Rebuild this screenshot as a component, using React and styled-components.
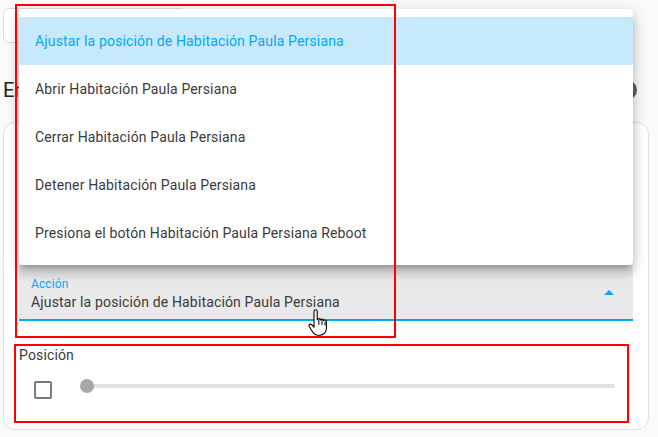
import React from 'react';
import styled, { createGlobalStyle } from 'styled-components';

const GlobalStyle = createGlobalStyle`
    body {
        margin: 0;
        background: #fafafa;
        font-family: Roboto, "Noto Sans", sans-serif;
        color: #212121;
    }
`;

const Page = styled.div`
    position: relative;
    width: 658px;
    height: 437px;
    padding: 8px 9px 0 3px;
    box-sizing: border-box;
    overflow: hidden;
`;
const SearchBox = styled.div`
    width: 183px;
    height: 35px;
    box-sizing: border-box;
    border: solid 1px #dcdcdc;
    border-radius: 6px;
    background: #fff;
`;
const Header = styled.div`
    display: flex;
    align-items: center;
    justify-content: space-between;
    height: 40px;
    margin-top: 27px;
    padding-right: 12px;
`;
const Heading = styled.h1`
    margin: 0;
    font-size: 20px;
    font-weight: 400;
    color: #212121;
`;
const HelpIcon = styled.div`
    width: 20px;
    height: 20px;
    border-radius: 50%;
    background: #5f5f5f;
`;
const Card = styled.section`
    margin-top: 12px;
    height: 308px;
    box-sizing: border-box;
    border: solid 1px #e0e0e0;
    border-radius: 12px;
    background: #fff;
    padding: 0 15px;
`;
const CardTop = styled.div`
    height: 142px;
`;
const Field = styled.div`
    position: relative;
    display: flex;
    align-items: center;
    height: 56px;
    box-sizing: border-box;
    padding: 0 12px;
    background: #e9e9e9;
    border-radius: 4px 4px 0 0;
    border-bottom: solid 2px #03a9f4;
`;
const FieldText = styled.div`
    flex: 1;
    padding-top: 6px;
`;
const FieldLabel = styled.div`
    font-size: 12px;
    color: #03a9f4;
    line-height: 14px;
    letter-spacing: 0.1px;
`;
const FieldValue = styled.div`
    font-size: 14px;
    color: #3a3a3a;
    line-height: 22px;
    letter-spacing: 0.15px;
`;
const Arrow = styled.div`
    width: 0;
    height: 0;
    margin-right: 7px;
    border-left: solid 5px transparent;
    border-right: solid 5px transparent;
    border-bottom: solid 5px #03a9f4;
`;
const Menu = styled.ul`
    position: absolute;
    left: 0;
    right: 0;
    bottom: 100%;
    margin: 0;
    padding: 8px 0;
    list-style: none;
    background: #fff;
    border-radius: 4px;
    box-shadow: 0 5px 5px -3px rgba(0, 0, 0, 0.2), 0 8px 10px 1px rgba(0, 0, 0, 0.14), 0 3px 14px 2px rgba(0, 0, 0, 0.12);
    z-index: 2;
`;
const MenuItem = styled.li`
    display: flex;
    align-items: center;
    height: 48px;
    padding: 0 16px;
    font-size: 14px;
    letter-spacing: 0.15px;
    color: ${(props) => (props.selected ? '#03a9f4' : '#3a3a3a')};
    background: ${(props) => (props.selected ? '#c6e9fb' : '#fff')};
`;
const Section = styled.div`
    margin-top: 24px;
`;
const SectionLabel = styled.div`
    font-size: 14px;
    line-height: 20px;
    letter-spacing: 0.15px;
    color: #3a3a3a;
`;
const SliderRow = styled.div`
    display: flex;
    align-items: flex-start;
    margin-top: 16px;
`;
const Checkbox = styled.div`
    width: 18px;
    height: 18px;
    box-sizing: border-box;
    margin-left: 15px;
    border: solid 2px #7a7a7a;
    border-radius: 2px;
`;
const Slider = styled.div`
    position: relative;
    flex: 1;
    height: 4px;
    margin: 3px 18px 0 35px;
    border-radius: 2px;
    background: #e2e2e2;
`;
const Thumb = styled.div`
    position: absolute;
    left: -7px;
    top: -5px;
    width: 14px;
    height: 14px;
    border-radius: 50%;
    background: #a8a8a8;
`;
const Mark = styled.div`
    position: absolute;
    left: ${(props) => props.x}px;
    top: ${(props) => props.y}px;
    width: ${(props) => props.w}px;
    height: ${(props) => props.h}px;
    box-sizing: border-box;
    border: solid 2px #f00;
    pointer-events: none;
    z-index: 5;
`;
const Cursor = styled.svg`
    position: absolute;
    left: 308px;
    top: 309px;
    z-index: 6;
`;

const actions = [
    'Ajustar la posición de Habitación Paula Persiana',
    'Abrir Habitación Paula Persiana',
    'Cerrar Habitación Paula Persiana',
    'Detener Habitación Paula Persiana',
    'Presiona el botón Habitación Paula Persiana Reboot',
];

function App() {
    return (
        <Page>
            <GlobalStyle />
            <SearchBox />
            <Header>
                <Heading>Entidades</Heading>
                <HelpIcon />
            </Header>
            <Card>
                <CardTop />
                <Field>
                    <Menu>
                        {actions.map((a, i) => (
                            <MenuItem key={a} selected={i === 0}>
                                {a}
                            </MenuItem>
                        ))}
                    </Menu>
                    <FieldText>
                        <FieldLabel>Acción</FieldLabel>
                        <FieldValue>{actions[0]}</FieldValue>
                    </FieldText>
                    <Arrow />
                </Field>
                <Section>
                    <SectionLabel>Posición</SectionLabel>
                    <SliderRow>
                        <Checkbox />
                        <Slider>
                            <Thumb />
                        </Slider>
                    </SliderRow>
                </Section>
            </Card>
            <Mark x={15} y={4} w={381} h={334} />
            <Mark x={14} y={344} w={615} h={79} />
            <Cursor width="22" height="28" viewBox="0 0 22 28">
                <path
                    d="M6 2.5c0-1 .7-1.7 1.6-1.7s1.6.7 1.6 1.7v8.3c.3-.8.9-1.2 1.6-1.2.9 0 1.5.6 1.6 1.5.3-.6.9-1 1.5-1 .9 0 1.6.7 1.6 1.6.3-.4.8-.7 1.300-.7.9 0 1.6.7 1.6 1.6v6.6c0 4-2.6 7-6.6 7H9.6c-2 0-3.3-.9-4.5-2.5L1.4 17.8c-.6-.8-.5-1.8.2-2.3.7-.5 1.7-.4 2.3.3L6 18.2V2.5z"
                    fill="#fff"
                    stroke="#000"
                    strokeWidth="1.1"
                    strokeLinejoin="round"
                />
                <path d="M10.8 11v4.5M14 11.5v4M17 13v3" stroke="#000" strokeWidth="1" strokeLinecap="round" />
            </Cursor>
        </Page>
    );
}

export default App;
